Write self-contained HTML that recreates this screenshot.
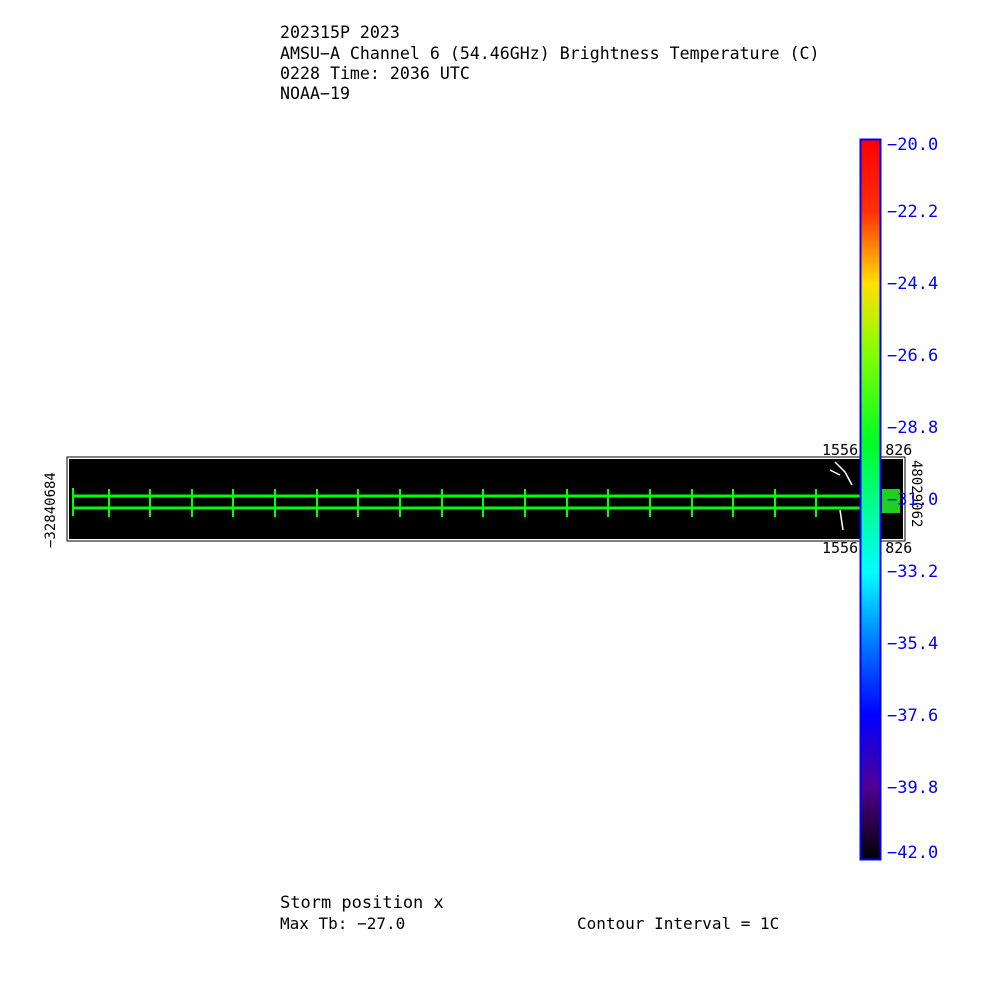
<!DOCTYPE html>
<html><head><style>
body{margin:0;background:#fff;width:1000px;height:1000px;position:relative;overflow:hidden;font-family:"DejaVu Sans Mono","Liberation Mono",monospace;}
.t{position:absolute;left:280px;font-size:16px;color:#000;white-space:pre;line-height:20px;}
.tt{font-size:16.6px;}
.l{position:absolute;left:887px;font-size:17px;color:#00f;white-space:pre;line-height:20px;}
</style></head><body>
<div class="t tt" style="top:23px">202315P 2023</div>
<div class="t tt" style="top:44px">AMSU−A Channel 6 (54.46GHz) Brightness Temperature (C)</div>
<div class="t tt" style="top:64px">0228 Time: 2036 UTC</div>
<div class="t tt" style="top:84px">NOAA−19</div>
<div class="t" style="top:893px;font-size:17px">Storm position x</div>
<div class="t" style="top:914px">Max Tb: −27.0</div>
<div class="t" style="top:914px;left:577px">Contour Interval = 1C</div>

<svg width="1000" height="1000" style="position:absolute;left:0;top:0">
<defs>
<linearGradient id="g" x1="0" y1="0" x2="0" y2="1">
<stop offset="0" stop-color="#ff0000"/>
<stop offset="0.1" stop-color="#ff3000"/>
<stop offset="0.2" stop-color="#ffe000"/>
<stop offset="0.3" stop-color="#80ff00"/>
<stop offset="0.42" stop-color="#00ff20"/>
<stop offset="0.6" stop-color="#00ffff"/>
<stop offset="0.72" stop-color="#0060ff"/>
<stop offset="0.8" stop-color="#0000ff"/>
<stop offset="0.9" stop-color="#500090"/>
<stop offset="1" stop-color="#000000"/>
</linearGradient>
</defs>
<rect x="67" y="457" width="838" height="84" fill="none" stroke="#000" stroke-width="1"/>
<rect x="69" y="459" width="834" height="80" fill="#000"/>
<g stroke="#00ff00" stroke-width="3">
<line x1="72" y1="496" x2="860" y2="496"/>
<line x1="72" y1="508" x2="860" y2="508"/>
</g>
<g stroke="#00ff00" stroke-width="2">
<line x1="73" y1="488" x2="73" y2="516"/>
<line x1="109" y1="489" x2="109" y2="517"/><line x1="150" y1="489" x2="150" y2="517"/><line x1="192" y1="489" x2="192" y2="517"/><line x1="233" y1="489" x2="233" y2="517"/><line x1="275" y1="489" x2="275" y2="517"/><line x1="317" y1="489" x2="317" y2="517"/><line x1="358" y1="489" x2="358" y2="517"/><line x1="400" y1="489" x2="400" y2="517"/><line x1="442" y1="489" x2="442" y2="517"/><line x1="483" y1="489" x2="483" y2="517"/><line x1="525" y1="489" x2="525" y2="517"/><line x1="567" y1="489" x2="567" y2="517"/><line x1="608" y1="489" x2="608" y2="517"/><line x1="650" y1="489" x2="650" y2="517"/><line x1="692" y1="489" x2="692" y2="517"/><line x1="733" y1="489" x2="733" y2="517"/><line x1="775" y1="489" x2="775" y2="517"/><line x1="816" y1="489" x2="816" y2="517"/>
</g>
<rect x="882" y="489" width="18" height="24" fill="#20d020"/>
<g stroke="#fff" stroke-width="1.5" fill="none">
<path d="M835 462 L845 472 L852 485"/><path d="M830 470 L840 475"/><path d="M840 510 L843 530"/>
</g>
<text x="55" y="548" font-size="14" transform="rotate(-90 55 548)" font-family="DejaVu Sans Mono,monospace">−32840684</text>
<text x="822" y="455" font-size="15">1556 8 826</text>
<text x="822" y="553" font-size="15">1556 8 826</text>
<text x="912" y="460" font-size="14" transform="rotate(90 912 460)">48029062</text>
<rect x="860.5" y="139.5" width="20" height="720" fill="url(#g)" stroke="#00f" stroke-width="2"/>
</svg>
<div class="l" style="top:135px">−20.0</div>
<div class="l" style="top:202px">−22.2</div>
<div class="l" style="top:274px">−24.4</div>
<div class="l" style="top:346px">−26.6</div>
<div class="l" style="top:418px">−28.8</div>
<div class="l" style="top:490px">−31.0</div>
<div class="l" style="top:562px">−33.2</div>
<div class="l" style="top:634px">−35.4</div>
<div class="l" style="top:706px">−37.6</div>
<div class="l" style="top:778px">−39.8</div>
<div class="l" style="top:843px">−42.0</div>
</body></html>
